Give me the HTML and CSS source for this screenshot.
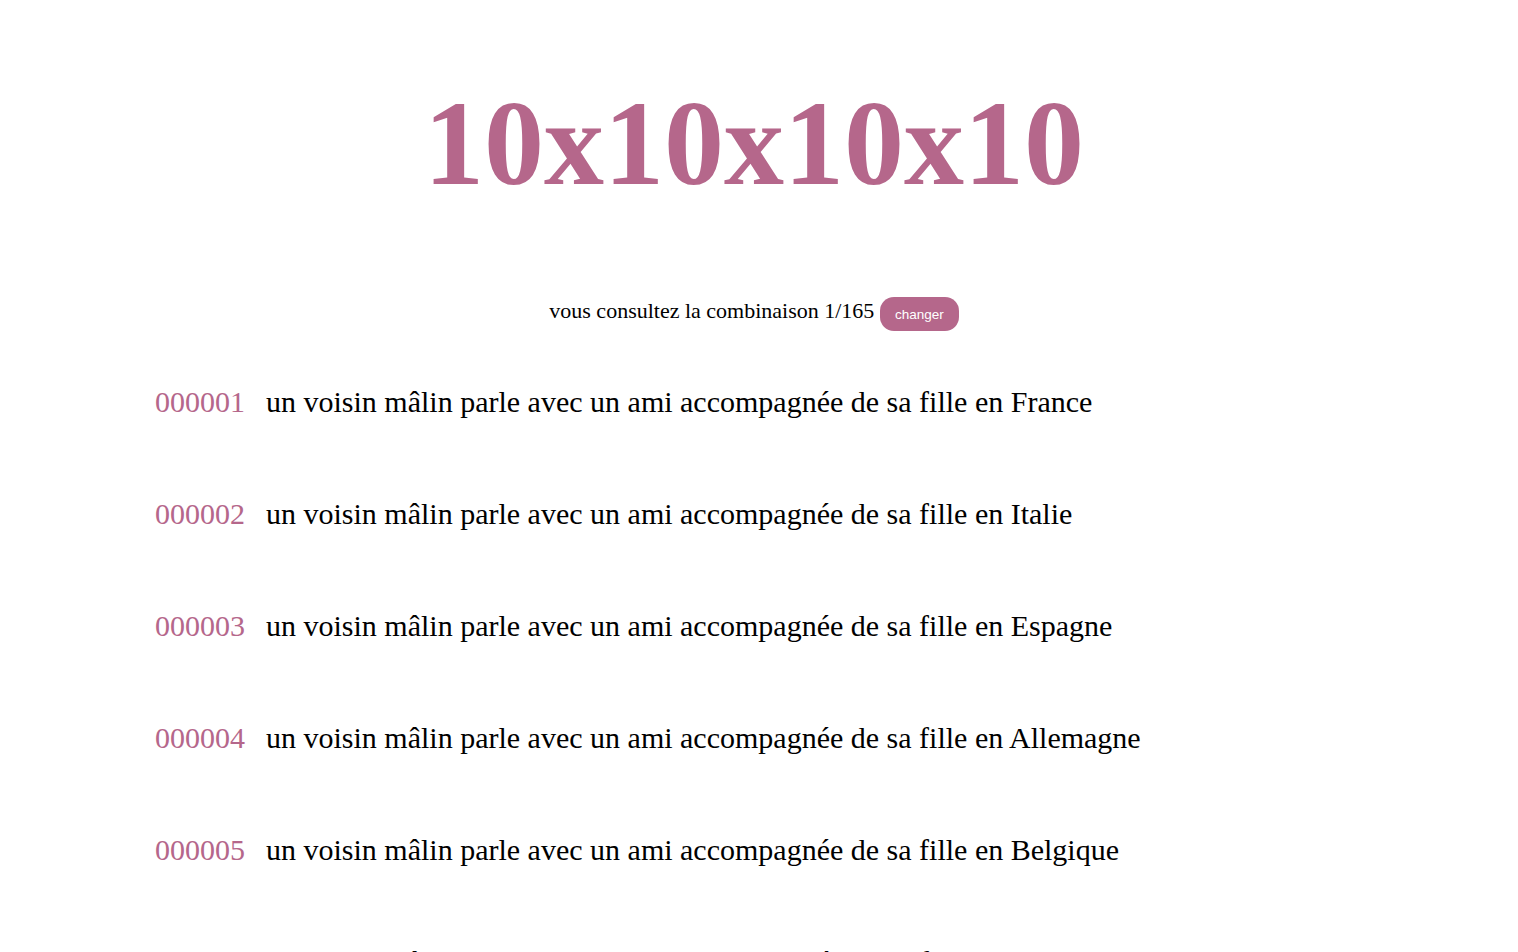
FILE: index.html
```html
<!DOCTYPE html>
<html lang="fr">
<head>
<meta charset="utf-8">
<title>10x10x10x10</title>
<link rel="stylesheet" href="styles.css">
</head>
<body>
<header class="head">
  <h1 class="title">10x10x10x10</h1>
  <p class="info">vous consultez la combinaison 1/165 <button class="btn">changer</button></p>
</header>
<main class="list">
  <div class="row"><span class="num">000001</span><span class="txt">un voisin mâlin parle avec un ami accompagnée de sa fille en France</span></div>
  <div class="row"><span class="num">000002</span><span class="txt">un voisin mâlin parle avec un ami accompagnée de sa fille en Italie</span></div>
  <div class="row"><span class="num">000003</span><span class="txt">un voisin mâlin parle avec un ami accompagnée de sa fille en Espagne</span></div>
  <div class="row"><span class="num">000004</span><span class="txt">un voisin mâlin parle avec un ami accompagnée de sa fille en Allemagne</span></div>
  <div class="row"><span class="num">000005</span><span class="txt">un voisin mâlin parle avec un ami accompagnée de sa fille en Belgique</span></div>
  <div class="row"><span class="num">000006</span><span class="txt">un voisin mâlin parle avec un ami accompagnée de sa fille en Suisse</span></div>
</main>
</body>
</html>
```

FILE: styles.css
```css
html, body {
  margin: 0;
  padding: 0;
  background: #ffffff;
}
body {
  font-family: "Liberation Serif", "Times New Roman", serif;
  color: #000000;
  overflow: hidden;
  height: 952px;
}
.head {
  text-align: center;
  padding: 60px 10px 0 0;
}
.title {
  margin: 0;
  font-size: 120px;
  font-weight: bold;
  color: #b5678b;
  line-height: 1.4;
}
.info {
  margin: 68px 0 0;
  font-size: 22px;
  line-height: 30px;
}
.btn {
  font-family: "Liberation Sans", Arial, sans-serif;
  font-size: 13.5px;
  color: #ffffff;
  background: #b5678b;
  border: none;
  border-radius: 14px;
  padding: 0 15px;
  height: 34px;
  vertical-align: middle;
  position: relative;
  top: 1px;
}
.list {
  padding: 54px 0 0 155px;
  display: flex;
  flex-direction: column;
  gap: 76px;
}
.row {
  display: flex;
  gap: 21px;
  font-size: 30px;
  line-height: 36px;
}
.num {
  color: #b5678b;
}
```
